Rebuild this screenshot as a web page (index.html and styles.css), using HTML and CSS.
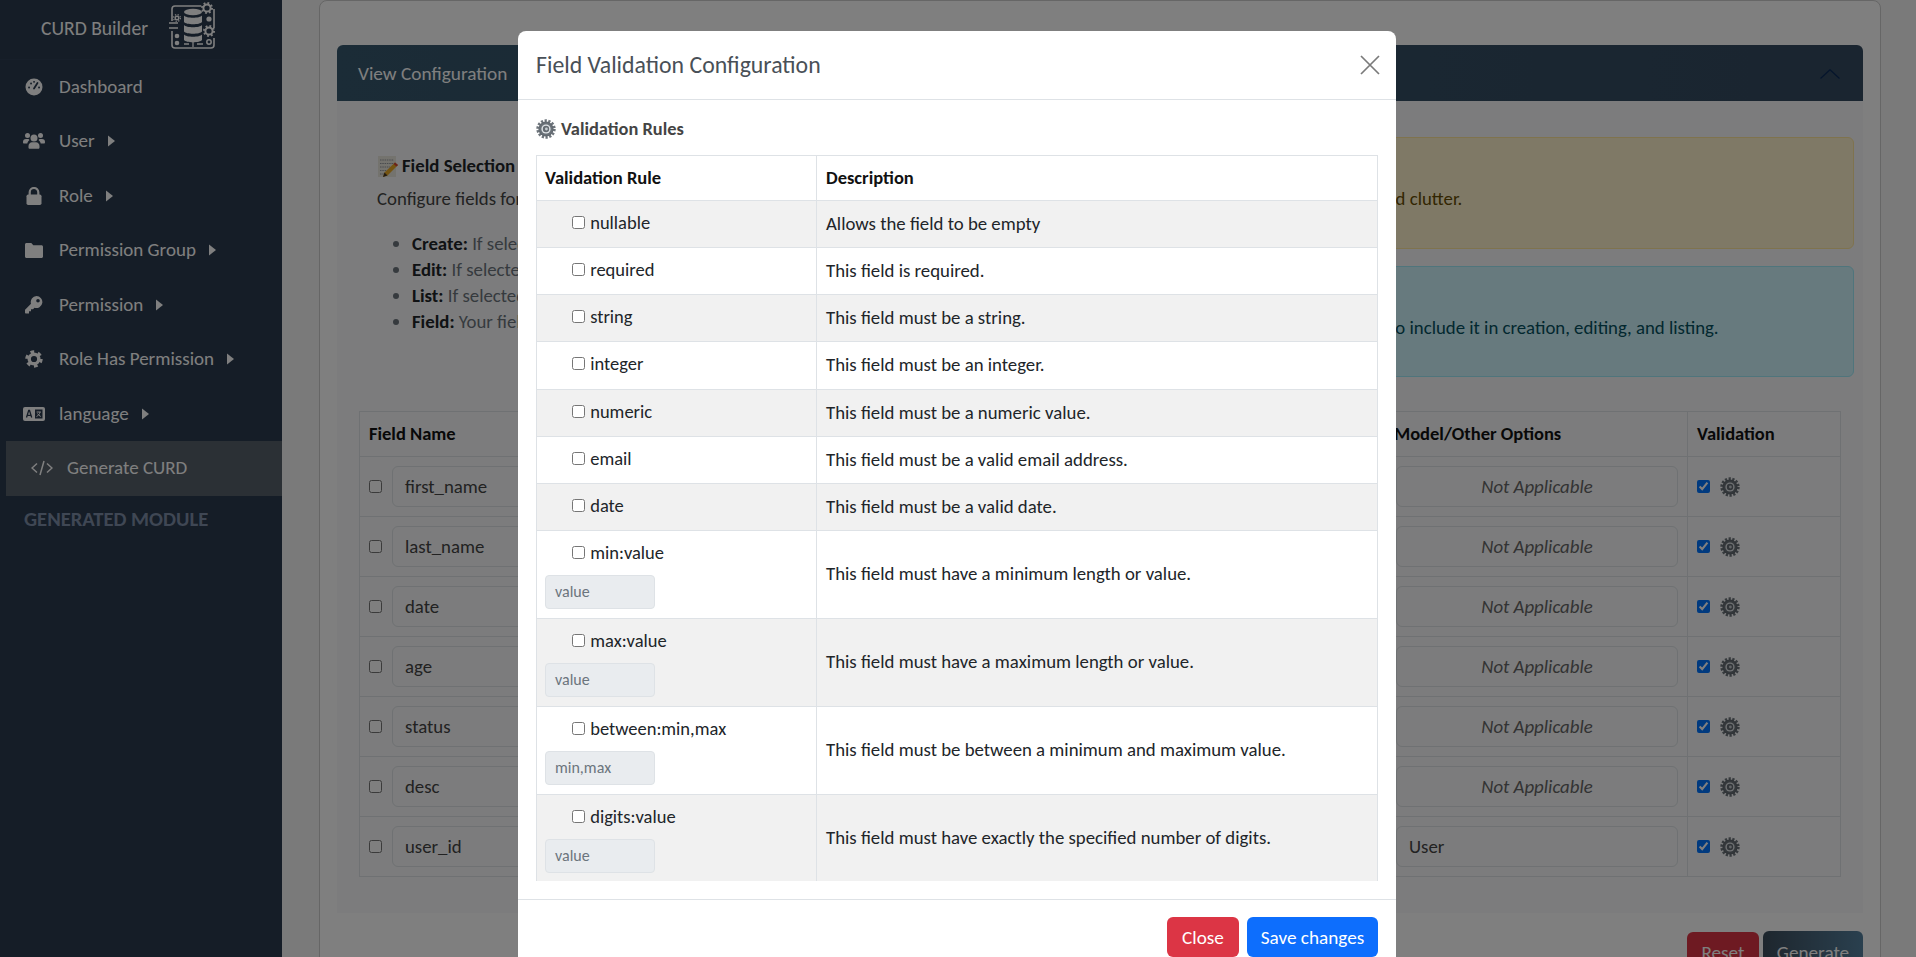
FILE: index.html
```html
<!DOCTYPE html>
<html lang="en">
<head>
  <meta charset="UTF-8"/>
  <title>CURD Builder</title>
  <link rel="stylesheet" href="styles.css">
</head>
<body>

<svg class="defs" width="0" height="0">
  <defs>
    <radialGradient id="gearFill">
      <stop offset="0" stop-color="#8d959c"/>
      <stop offset="1" stop-color="#5d646b"/>
    </radialGradient>
    <symbol id="gear" viewBox="0 0 20 20">
      <circle cx="10" cy="10" r="8.2" fill="none" stroke="#6d747b" stroke-width="3" stroke-dasharray="2.2 1.5"/>
      <circle cx="10" cy="10" r="7.6" fill="url(#gearFill)"/>
      <circle cx="10" cy="10" r="4.6" fill="#dfe3e6"/>
      <circle cx="10" cy="10" r="3.2" fill="#646b72"/>
      <circle cx="10.4" cy="10" r="1.4" fill="#c6ccd1"/>
    </symbol>
    <symbol id="caret" viewBox="0 0 7 12">
      <path d="M0 .5 7 6 0 11.5z" fill="currentColor"/>
    </symbol>
  </defs>
</svg>

<div class="page">

  <!-- Sidebar -->
  <aside class="sidebar">
    <div class="brand">
      <span class="brand-name">CURD Builder</span>
      <svg class="brand-logo" viewBox="0 0 48 50" fill="none" stroke="currentColor" stroke-width="1.6">
        <path d="M32 5H6a3 3 0 0 0-3 3v12M3 30v14a3 3 0 0 0 3 3h36a3 3 0 0 0 3-3V37M45 27V8"/>
        <path d="M0 22h9M0 27h9" stroke-width="1.4"/>
        <ellipse cx="24" cy="11" rx="9" ry="3.2" fill="currentColor" stroke="none"/>
        <path d="M15 14.5c2 3 16 3 18 0V21c-2 3-16 3-18 0zM15 24c2 3 16 3 18 0v6.500c-2 3-16 3-18 0zM15 33.500c2 3 16 3 18 0V39c-2 3-16 3-18 0z" fill="currentColor" stroke="none"/>
        <circle cx="38" cy="7" r="3.600" stroke-width="2"/>
        <circle cx="38" cy="7" r="5" stroke-width="2" stroke-dasharray="1.800 2.100"/>
        <circle cx="40" cy="30" r="3.600" stroke-width="2"/>
        <circle cx="40" cy="30" r="5" stroke-width="2" stroke-dasharray="1.800 2.100"/>
        <circle cx="8" cy="17" r="1.800" stroke-width="1.400"/>
        <circle cx="8" cy="17" r="3.400" stroke-width="1.200" stroke-dasharray="1.300 1.400"/>
        <circle cx="40" cy="18" r="2.600" fill="currentColor" stroke="none"/>
        <circle cx="8" cy="35" r="2.300" fill="currentColor" stroke="none"/>
        <circle cx="8" cy="42" r="2.300" fill="currentColor" stroke="none"/>
        <circle cx="40" cy="41" r="2.200" stroke-width="1.500"/>
        <path d="M15 43h5M24 41v5M28 43h6" stroke-width="1.300"/>
      </svg>
    </div>

    <nav class="menu">
      <a class="menu-item">
        <svg class="menu-icon" viewBox="0 0 18 18"><circle cx="9" cy="9" r="8.500" fill="currentColor"/><path d="M9 10.500 12.500 5M4 9.500h.1M6 5.500h.1M9 3.800h.1M14 9.500h.1" stroke="#2a3a4e" stroke-width="1.800" stroke-linecap="round"/></svg>
        Dashboard
      </a>
      <a class="menu-item">
        <svg class="menu-icon menu-icon-wide" viewBox="0 0 22 18"><g fill="currentColor"><circle cx="4.500" cy="3.500" r="2.500"/><circle cx="17.500" cy="3.500" r="2.500"/><circle cx="11" cy="6" r="3.500"/><path d="M0 10c0-2 1-3 3-3h2.500l1 1c-1 .8-2 2-2.200 3.500H1c-.6 0-1-.4-1-1.500zM22 10c0-2-1-3-3-3h-2.500l-1 1c1 .8 2 2 2.200 3.500H21c.6 0 1-.4 1-1.500zM5.500 14c0-2 1.500-3.800 3.500-3.800h4c2 0 3.500 1.800 3.500 3.800v1.500c0 .8-.5 1.300-1.300 1.300H6.800c-.8 0-1.300-.5-1.300-1.300z"/></g></svg>
        User
        <svg class="menu-caret"><use href="#caret"/></svg>
      </a>
      <a class="menu-item">
        <svg class="menu-icon" viewBox="0 0 18 18"><path d="M4.700 8V5.300a4.300 4.300 0 0 1 8.600 0V8" fill="none" stroke="currentColor" stroke-width="2.200"/><rect x="1.500" y="7.500" width="15" height="10.500" rx="1.700" fill="currentColor"/></svg>
        Role
        <svg class="menu-caret"><use href="#caret"/></svg>
      </a>
      <a class="menu-item">
        <svg class="menu-icon" viewBox="0 0 18 18"><path d="M0 3.500C0 2.600.7 2 1.500 2h4.800l2 2.200h8.200c.8 0 1.500.7 1.500 1.500v9.800c0 .8-.7 1.500-1.500 1.500h-15C.7 17 0 16.300 0 15.500z" fill="currentColor"/></svg>
        Permission Group
        <svg class="menu-caret"><use href="#caret"/></svg>
      </a>
      <a class="menu-item">
        <svg class="menu-icon" viewBox="0 0 18 18"><path d="M11.500 0a6 6 0 1 1-2 11.700L8 13.300H6v2H4v2.200H.8c-.5 0-.8-.3-.8-.8v-2.500c0-.3.1-.5.300-.7L6 7.700A6 6 0 0 1 11.500 0zm1.500 3a1.800 1.800 0 1 0 0 3.600A1.800 1.800 0 0 0 13 3z" fill="currentColor" fill-rule="evenodd"/></svg>
        Permission
        <svg class="menu-caret"><use href="#caret"/></svg>
      </a>
      <a class="menu-item">
        <svg class="menu-icon" viewBox="0 0 18 18"><circle cx="9" cy="9" r="4.800" fill="none" stroke="currentColor" stroke-width="3.400"/><circle cx="9" cy="9" r="7.200" fill="none" stroke="currentColor" stroke-width="3" stroke-dasharray="3.700 3.850"/></svg>
        Role Has Permission
        <svg class="menu-caret"><use href="#caret"/></svg>
      </a>
      <a class="menu-item">
        <svg class="menu-icon menu-icon-wide" viewBox="0 0 22 14"><rect width="22" height="14" rx="2" fill="currentColor"/><path d="M3.500 10.500 5.700 3.500h.8L8.700 10.500M4.600 8.300h3.100" fill="none" stroke="#2a3a4e" stroke-width="1.300"/><rect x="12" y="2.500" width="7.500" height="9" fill="#2a3a4e"/><path d="M13.600 5h4.300M17 5c-.3 2-1.700 3.600-3.500 4.600M14.500 6.500c.7 1.300 2 2.400 3.300 3" fill="none" stroke="currentColor" stroke-width="1"/></svg>
        language
        <svg class="menu-caret"><use href="#caret"/></svg>
      </a>
      <a class="menu-item menu-item-active">
        <svg class="menu-icon menu-icon-wide" viewBox="0 0 22 16" fill="none" stroke="currentColor" stroke-width="1.500"><path d="M6 3.500 1 8l5 4.500M16 3.500 21 8l-5 4.500M13 1 9 15"/></svg>
        Generate CURD
      </a>
      <div class="menu-heading">GENERATED MODULE</div>
    </nav>
  </aside>

  <!-- Main content -->
  <main class="content">
    <div class="outer-card">
      <section class="config">
        <header class="config-header">
          <span>View Configuration</span>
          <svg class="config-chevron" viewBox="0 0 20 10" fill="none" stroke="currentColor" stroke-width="1.200"><path d="M.5 9.500 10 .7l9.500 8.800"/></svg>
        </header>

        <div class="config-body">
          <div class="config-intro">
            <div class="intro-text">
              <h6 class="intro-title">
                <svg class="emoji" viewBox="0 0 20 21"><rect width="18" height="21" fill="#e9e6dc"/><path d="M2 4h14M2 7.500h14M2 11h10M2 14.500h7M2 18h5" stroke="#8b8f96" stroke-width=".9" stroke-dasharray="1.500 .8"/><path d="M17 6.500 20 9 9.500 19.500l-4.500 1.500 1.500-4.500z" fill="#e9a824"/><path d="M17 6.500 20 9l-1.500 1.500-3-2.500z" fill="#d6453c"/><path d="M6.500 16.500 5 21l4.500-1.500z" fill="#4b3a26"/></svg>
                Field Selection
              </h6>
              <p class="intro-lead">Configure fields for</p>
              <ul class="intro-list">
                <li><b>Create:</b> If selected</li>
                <li><b>Edit:</b> If selected</li>
                <li><b>List:</b> If selected</li>
                <li><b>Field:</b> Your field</li>
              </ul>
            </div>
            <div class="intro-alerts">
              <div class="alert alert-warning">
                <p>Select only the fields which you truly need to avoid clutter.</p>
              </div>
              <div class="alert alert-info">
                <p>Mark each field you want to keep in this module to include it in creation, editing, and listing.</p>
              </div>
            </div>
          </div>

          <table class="fields">
            <thead>
              <tr>
                <th class="col-name">Field Name</th>
                <th class="col-type"></th>
                <th class="col-model">Model/Other Options</th>
                <th>Validation</th>
              </tr>
            </thead>
            <tbody>
              <tr>
                <td><div class="field-cell"><input type="checkbox"><div class="box">first_name</div></div></td>
                <td><div class="box"></div></td>
                <td><div class="box box-na">Not Applicable</div></td>
                <td><div class="valid-cell"><input type="checkbox" checked><svg class="gear"><use href="#gear"/></svg></div></td>
              </tr>
              <tr>
                <td><div class="field-cell"><input type="checkbox"><div class="box">last_name</div></div></td>
                <td><div class="box"></div></td>
                <td><div class="box box-na">Not Applicable</div></td>
                <td><div class="valid-cell"><input type="checkbox" checked><svg class="gear"><use href="#gear"/></svg></div></td>
              </tr>
              <tr>
                <td><div class="field-cell"><input type="checkbox"><div class="box">date</div></div></td>
                <td><div class="box"></div></td>
                <td><div class="box box-na">Not Applicable</div></td>
                <td><div class="valid-cell"><input type="checkbox" checked><svg class="gear"><use href="#gear"/></svg></div></td>
              </tr>
              <tr>
                <td><div class="field-cell"><input type="checkbox"><div class="box">age</div></div></td>
                <td><div class="box"></div></td>
                <td><div class="box box-na">Not Applicable</div></td>
                <td><div class="valid-cell"><input type="checkbox" checked><svg class="gear"><use href="#gear"/></svg></div></td>
              </tr>
              <tr>
                <td><div class="field-cell"><input type="checkbox"><div class="box">status</div></div></td>
                <td><div class="box"></div></td>
                <td><div class="box box-na">Not Applicable</div></td>
                <td><div class="valid-cell"><input type="checkbox" checked><svg class="gear"><use href="#gear"/></svg></div></td>
              </tr>
              <tr>
                <td><div class="field-cell"><input type="checkbox"><div class="box">desc</div></div></td>
                <td><div class="box"></div></td>
                <td><div class="box box-na">Not Applicable</div></td>
                <td><div class="valid-cell"><input type="checkbox" checked><svg class="gear"><use href="#gear"/></svg></div></td>
              </tr>
              <tr>
                <td><div class="field-cell"><input type="checkbox"><div class="box">user_id</div></div></td>
                <td><div class="box"></div></td>
                <td><div class="box">User</div></td>
                <td><div class="valid-cell"><input type="checkbox" checked><svg class="gear"><use href="#gear"/></svg></div></td>
              </tr>
            </tbody>
          </table>
        </div>
      </section>

      <div class="actions">
        <button class="btn btn-reset">Reset</button>
        <button class="btn btn-generate">Generate</button>
      </div>
    </div>
  </main>
</div>

<!-- Backdrop -->
<div class="backdrop"></div>

<!-- Validation modal -->
<div class="modal-wrap">
  <div class="modal">
    <div class="modal-header">
      <h5 class="modal-title">Field Validation Configuration</h5>
      <svg class="modal-close" viewBox="0 0 20 20" fill="none" stroke="currentColor" stroke-width="1.700"><path d="M1 1l18 18M19 1 1 19"/></svg>
    </div>

    <div class="modal-body">
      <h6 class="rules-title"><svg class="gear"><use href="#gear"/></svg> Validation Rules</h6>
      <div class="rules-scroll">
        <table class="rules">
          <thead>
            <tr><th class="col-rule">Validation Rule</th><th>Description</th></tr>
          </thead>
          <tbody>
            <tr>
              <td><label class="rule-check"><input type="checkbox"> nullable</label></td>
              <td>Allows the field to be empty</td>
            </tr>
            <tr>
              <td><label class="rule-check"><input type="checkbox"> required</label></td>
              <td>This field is required.</td>
            </tr>
            <tr>
              <td><label class="rule-check"><input type="checkbox"> string</label></td>
              <td>This field must be a string.</td>
            </tr>
            <tr>
              <td><label class="rule-check"><input type="checkbox"> integer</label></td>
              <td>This field must be an integer.</td>
            </tr>
            <tr>
              <td><label class="rule-check"><input type="checkbox"> numeric</label></td>
              <td>This field must be a numeric value.</td>
            </tr>
            <tr>
              <td><label class="rule-check"><input type="checkbox"> email</label></td>
              <td>This field must be a valid email address.</td>
            </tr>
            <tr>
              <td><label class="rule-check"><input type="checkbox"> date</label></td>
              <td>This field must be a valid date.</td>
            </tr>
            <tr>
              <td><label class="rule-check"><input type="checkbox"> min:value</label><div class="rule-input">value</div></td>
              <td>This field must have a minimum length or value.</td>
            </tr>
            <tr>
              <td><label class="rule-check"><input type="checkbox"> max:value</label><div class="rule-input">value</div></td>
              <td>This field must have a maximum length or value.</td>
            </tr>
            <tr>
              <td><label class="rule-check"><input type="checkbox"> between:min,max</label><div class="rule-input">min,max</div></td>
              <td>This field must be between a minimum and maximum value.</td>
            </tr>
            <tr>
              <td><label class="rule-check"><input type="checkbox"> digits:value</label><div class="rule-input">value</div></td>
              <td>This field must have exactly the specified number of digits.</td>
            </tr>
          </tbody>
        </table>
      </div>
    </div>

    <div class="modal-footer">
      <button class="btn btn-close">Close</button>
      <button class="btn btn-save">Save changes</button>
    </div>
  </div>
</div>

</body>
</html>
```

FILE: styles.css
```css
html, body {
  margin: 0; padding: 0; height: 100%; overflow: hidden;
}
body {
  font-family: Carlito, Lato, "Open Sans", sans-serif;
  font-size: 18.8px;
  line-height: 24px;
  color: #212529;
  background: #f4f4f4;
}
.defs { position: absolute; }

.page {
  display: flex;
  height: 957px;
}

/* Sidebar */
.sidebar {
  width: 282px;
  flex: none;
  background: #2a3a4e;
  color: #fff;
}
.brand {
  height: 58.5px;
  padding-left: 41px;
  display: flex;
  align-items: center;
  gap: 21px;
  border-bottom: 1px solid #2e3f54;
}
.brand-name {
  margin-top: -2px;
  font-size: 19.6px;
  font-weight: 300;
  color: #fff;
}
.brand-logo {
  width: 48px;
  height: 50px;
  color: #fff;
  margin-top: -6px;
}
.menu-item {
  height: 54.5px;
  box-sizing: border-box;
  padding-left: 25px;
  display: flex;
  align-items: center;
  font-size: 19px;
  color: #fff;
}
.menu-icon {
  width: 18px;
  height: 18px;
  margin-right: 16px;
  flex: none;
}
.menu-icon-wide {
  width: 22px;
  margin-left: -2px;
  margin-right: 14px;
}
.menu-caret {
  width: 7px;
  height: 12px;
  margin-left: 13px;
}
.menu-item-active {
  margin-left: 6px;
  padding-left: 27px;
  background: #56606b;
}
.menu-heading {
  padding: 11px 0 0 24px;
  font-size: 20.6px;
  color: #7f8ea8;
  font-weight: 600;
}

/* Main */
.content {
  flex: 1;
  min-width: 0;
  padding: 0 35px 0 37px;
}
.outer-card {
  background: #fff;
  border: 1px solid #ccc;
  border-radius: 8px;
  padding: 44px 17px 0;
}
.config-header {
  height: 56px;
  padding: 2px 23px 0 21px;
  box-sizing: border-box;
  border-radius: 6px 6px 0 0;
  display: flex;
  align-items: center;
  justify-content: space-between;
  font-size: 19.3px;
  color: #fff;
  background: linear-gradient(90deg, #36586e, #344a60);
}
.config-chevron {
  width: 20px;
  height: 10px;
  color: #0a2a58;
}
.config-body {
  background: #f8f9fa;
  padding: 36px 22px 36px;
}
.config-intro {
  display: grid;
  grid-template-columns: minmax(0, 1fr) 854px;
  margin-right: -13px;
}
.intro-text {
  padding: 17px 0 0 18px;
  white-space: nowrap;
  overflow: hidden;
}
.intro-title {
  display: flex;
  align-items: center;
  gap: 4px;
  margin: 0 0 9px;
  font-size: 18.8px;
  font-weight: 600;
  color: #212529;
}
.emoji {
  width: 20px;
  height: 21px;
  margin-left: 1px;
}
.intro-lead {
  margin: 0 0 20px;
  color: #444;
}
.intro-list {
  margin: 0;
  padding-left: 35px;
  line-height: 26px;
  color: #6c757d;
}
.intro-list b {
  font-weight: 600;
  color: #212529;
}
.intro-alerts {
  display: flex;
  flex-direction: column;
  gap: 17px;
}
.alert {
  height: 111px;
  box-sizing: border-box;
  padding: 49px 17px 0;
  border: 1px solid;
  border-radius: 6px;
}
.alert p { margin: 0; }
.alert-warning {
  height: 112px;
  background: #fff3cd;
  border-color: #ffe69c;
  color: #664d03;
}
.alert-info {
  background: #cff4fc;
  border-color: #9eeaf9;
  color: #055160;
}

.fields {
  width: 100%;
  margin-top: 34px;
  border-collapse: collapse;
  table-layout: fixed;
}
.fields th,
.fields td {
  box-sizing: border-box;
  border: 1px solid #dee2e6;
  padding: 9px;
  text-align: left;
}
.fields th {
  font-size: 18.5px;
  font-weight: 600;
  color: #111;
  line-height: 26px;
}
.fields th.col-model { padding-left: 7px; }
.col-name { width: 500px; }
.col-type { width: 527px; }
.col-model { width: 301px; }
.field-cell {
  display: flex;
  align-items: center;
  gap: 10px;
}
.field-cell input,
.valid-cell input {
  margin: 0;
  flex: none;
}
.box {
  flex: 1;
  height: 41px;
  box-sizing: border-box;
  padding: 8px 12px;
  border: 1px solid #dee2e6;
  border-radius: 6px;
  color: #444;
}
.box-na {
  text-align: center;
  font-style: italic;
  color: #666;
}
.valid-cell {
  display: flex;
  align-items: center;
  gap: 10px;
}
.gear {
  width: 20px;
  height: 20px;
  flex: none;
}

.actions {
  display: flex;
  justify-content: flex-end;
  gap: 4px;
  padding-top: 18px;
}
.btn {
  height: 40px;
  padding: 1px 12px 0;
  border: none;
  border-radius: 6px;
  font: inherit;
  font-size: 19.2px;
  color: #fff;
}
.btn-reset {
  width: 72px;
  height: 41px;
  background: #dc3545;
  margin-top: 1px;
}
.btn-generate {
  width: 100px;
  height: 42px;
  background: linear-gradient(90deg, #3c4d5c, #54809e);
}

/* Backdrop + modal */
.backdrop {
  position: fixed;
  inset: 0;
  background: rgba(0, 0, 0, .5);
}
.modal-wrap {
  position: fixed;
  inset: 0;
  padding-top: 31px;
  overflow: hidden;
}
.modal {
  width: 878px;
  margin: 0 0 0 518px;
  background: #fff;
  border-radius: 8px;
}
.modal-header {
  height: 69px;
  box-sizing: border-box;
  padding: 0 16px 0 18px;
  border-bottom: 1px solid #dee2e6;
  display: flex;
  align-items: center;
  justify-content: space-between;
}
.modal-title {
  margin: 0;
  font-size: 23.8px;
  font-weight: 400;
  color: #495057;
}
.modal-close {
  width: 20px;
  height: 20px;
  color: #7a7a7a;
}
.modal-body {
  height: 799px;
  box-sizing: border-box;
  padding: 17px 18px 18px;
  display: flex;
  flex-direction: column;
}
.rules-title {
  display: flex;
  align-items: center;
  gap: 5px;
  height: 24px;
  margin: 0 0 14px;
  font-size: 18.4px;
  font-weight: 600;
  color: #444;
}
.rules-scroll {
  flex: 1;
  min-height: 0;
  overflow: hidden;
}
.rules {
  width: 100%;
  border-collapse: collapse;
  table-layout: fixed;
}
.rules th,
.rules td {
  box-sizing: border-box;
  border: 1px solid #dee2e6;
  padding: 8px;
  text-align: left;
  color: #212529;
}
.rules th + th,
.rules td + td {
  padding-left: 9px;
}
.rules th {
  font-size: 18.5px;
  font-weight: 600;
  color: #111;
  line-height: 28px;
}
.rules tbody tr:nth-child(odd) td {
  background: #f1f1f1;
}
.col-rule { width: 280px; }
.rule-check {
  display: block;
  line-height: 28px;
  margin-bottom: 2.14px;
  padding-left: 27px;
  font-size: 18.5px;
}
.rule-check input {
  margin: 0 1px 0 0;
}
.rule-input {
  width: 110px;
  height: 34px;
  box-sizing: border-box;
  margin: 8px 0 1px;
  padding: 4px 9px;
  background: #e9ecef;
  border: 1px solid #dee2e6;
  border-radius: 4px;
  font-size: 16px;
  color: #6c757d;
}
.modal-footer {
  border-top: 1px solid #dee2e6;
  padding: 17px 18px;
  display: flex;
  justify-content: flex-end;
  gap: 8px;
}
.btn-close { width: 72px; background: #dc3545; }
.btn-save { width: 131px; background: #0d6efd; }
```
